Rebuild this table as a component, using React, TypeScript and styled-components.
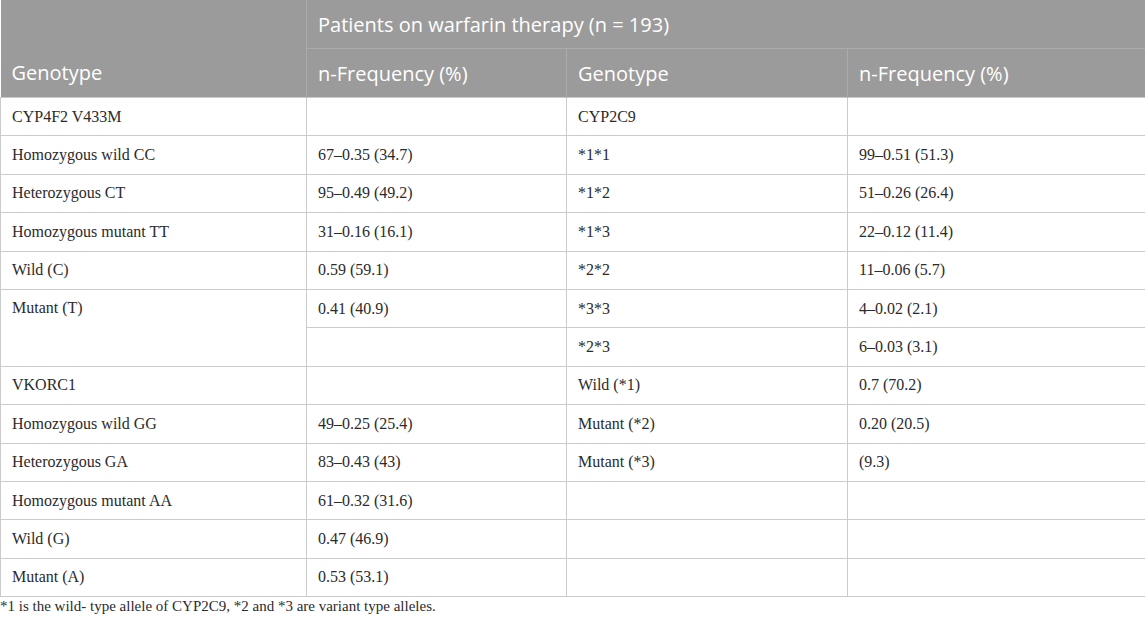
import React from "react";
import styled, { createGlobalStyle } from "styled-components";

const Global = createGlobalStyle`
  html, body { margin: 0; padding: 0; background: #fff; }
`;

const Wrap = styled.div`
  width: 1145px;
`;

const Table = styled.table`
  width: 1145px;
  border-collapse: collapse;
  table-layout: fixed;
`;

const HeadCell = styled.th<{ $topLine?: boolean }>`
  background: #9b9b9b;
  color: #fff;
  font-family: "Open Sans", "Noto Sans", sans-serif;
  font-weight: 400;
  font-size: 20px;
  text-align: left;
  padding: 0 11px;
  border-left: 1px solid #ababab;
  border-top: ${(p) => (p.$topLine ? "1px solid #ababab" : "none")};
  height: 48px;
  vertical-align: middle;
  white-space: nowrap;
  &:first-child { border-left: none; }
`;

const HeadRow = styled.tr``;

const Row = styled.tr`
  height: 38.4px;
`;

const Cell = styled.td<{ $top?: boolean }>`
  font-family: "Liberation Serif", "Times New Roman", serif;
  font-size: 16px;
  color: #2b2b2b;
  padding: 0 11px;
  border: 1px solid #cbcbcb;
  vertical-align: ${(p) => (p.$top ? "top" : "middle")};
  padding-top: ${(p) => (p.$top ? "9px" : "0")};
  white-space: nowrap;
`;

const Note = styled.p`
  margin: 0;
  padding: 1px 0 0 0;
  font-family: "Liberation Serif", "Times New Roman", serif;
  font-size: 15px;
  color: #2b2b2b;
`;

type R = [string | null, string, string, string];

const rows: R[] = [
  ["CYP4F2 V433M", "", "CYP2C9", ""],
  ["Homozygous wild CC", "67–0.35 (34.7)", "*1*1", "99–0.51 (51.3)"],
  ["Heterozygous CT", "95–0.49 (49.2)", "*1*2", "51–0.26 (26.4)"],
  ["Homozygous mutant TT", "31–0.16 (16.1)", "*1*3", "22–0.12 (11.4)"],
  ["Wild (C)", "0.59 (59.1)", "*2*2", "11–0.06 (5.7)"],
  ["Mutant (T)", "0.41 (40.9)", "*3*3", "4–0.02 (2.1)"],
  [null, "", "*2*3", "6–0.03 (3.1)"],
  ["VKORC1", "", "Wild (*1)", "0.7 (70.2)"],
  ["Homozygous wild GG", "49–0.25 (25.4)", "Mutant (*2)", "0.20 (20.5)"],
  ["Heterozygous GA", "83–0.43 (43)", "Mutant (*3)", "(9.3)"],
  ["Homozygous mutant AA", "61–0.32 (31.6)", "", ""],
  ["Wild (G)", "0.47 (46.9)", "", ""],
  ["Mutant (A)", "0.53 (53.1)", "", ""],
];

export default function App() {
  return (
    <Wrap>
      <Global />
      <Table>
        <colgroup>
          <col style={{ width: 306 }} />
          <col style={{ width: 260 }} />
          <col style={{ width: 281 }} />
          <col style={{ width: 298 }} />
        </colgroup>
        <thead>
          <HeadRow>
            <HeadCell />
            <HeadCell colSpan={3}>Patients on warfarin therapy (n = 193)</HeadCell>
          </HeadRow>
          <HeadRow>
            <HeadCell>Genotype</HeadCell>
            <HeadCell $topLine>n-Frequency (%)</HeadCell>
            <HeadCell $topLine>Genotype</HeadCell>
            <HeadCell $topLine>n-Frequency (%)</HeadCell>
          </HeadRow>
        </thead>
        <tbody>
          {rows.map((r, i) => (
            <Row key={i}>
              {r[0] !== null && (
                <Cell rowSpan={r[0] === "Mutant (T)" ? 2 : 1} $top={r[0] === "Mutant (T)"}>
                  {r[0]}
                </Cell>
              )}
              <Cell>{r[1]}</Cell>
              <Cell>{r[2]}</Cell>
              <Cell>{r[3]}</Cell>
            </Row>
          ))}
        </tbody>
      </Table>
      <Note>*1 is the wild- type allele of CYP2C9, *2 and *3 are variant type alleles.</Note>
    </Wrap>
  );
}
